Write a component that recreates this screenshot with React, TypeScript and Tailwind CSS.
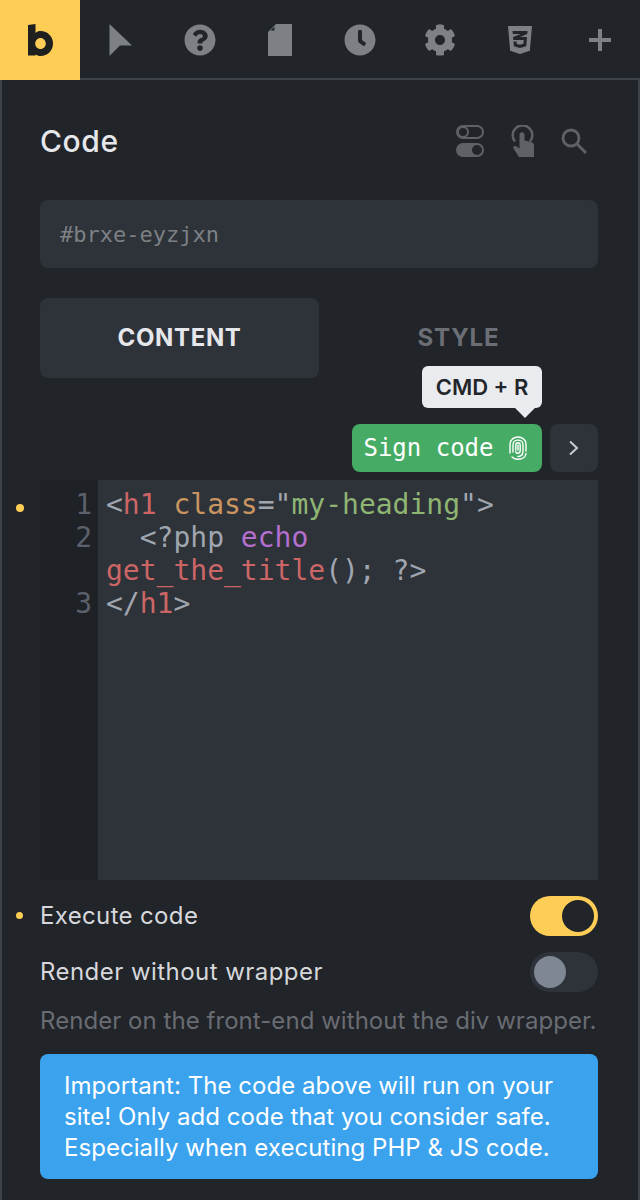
import React from "react";
import { FaCog, FaClock, FaQuestionCircle, FaCss3Alt } from "react-icons/fa";

const sans = "font-['Inter',sans-serif]";
const mono = "font-['DejaVu_Sans_Mono',monospace]";

const Cursor = () => (
  <svg width="23" height="32" viewBox="0 0 23 32" fill="currentColor">
    <path d="M0.5 0 L23 21.5 L11 21.5 L0.5 32 Z" />
  </svg>
);

const Doc = () => (
  <svg width="24" height="32" viewBox="0 0 24 32" fill="currentColor">
    <path d="M8 0 H24 V32 H0 V8 Z M6.5 2.5 L2.5 6.5 H6.5 Z" fillRule="evenodd" />
  </svg>
);

const Plus = () => (
  <svg width="22" height="22" viewBox="0 0 22 22" fill="currentColor">
    <rect x="0" y="9" width="22" height="4" />
    <rect x="9" y="0" width="4" height="22" />
  </svg>
);

const Toggles = () => (
  <svg width="28" height="32" viewBox="0 0 28 32">
    <rect x="1" y="1" width="26" height="12" rx="6" fill="none" stroke="currentColor" strokeWidth="2" />
    <circle cx="7" cy="7" r="5" fill="none" stroke="currentColor" strokeWidth="2" />
    <rect x="0" y="18" width="28" height="14" rx="7" fill="currentColor" />
    <circle cx="21" cy="25" r="5" fill="#212429" />
  </svg>
);

const Tap = () => (
  <svg width="23" height="32" viewBox="0 0 23 32">
    <path d="M4 16.5 A9.8 9.8 0 1 1 19 16.5" fill="none" stroke="currentColor" strokeWidth="2.5" />
    <path
      d="M8.5 9.5 C8.5 6.5 13.5 6.5 13.5 9.5 V15.5 L20 17 C22 17.5 23 18.5 23 20.5 V32 H8 L2.5 23.5 C1.5 21.5 4 20 5.5 21.5 L8.5 23.5 Z"
      fill="currentColor"
    />
  </svg>
);

const Search = () => (
  <svg width="26" height="26" viewBox="0 0 26 26" fill="none" stroke="currentColor" strokeWidth="2.8">
    <circle cx="10" cy="10" r="8" />
    <path d="M16 16 L25 25" />
  </svg>
);

const Fingerprint = () => (
  <svg width="18" height="24" viewBox="0 0 18 24" fill="none" stroke="currentColor" strokeWidth="1.4" strokeLinecap="round">
    <path d="M1 17 V8.5 C1 -1.5 17 -1.5 17 8.5 V15" />
    <path d="M17 17.5 C16.5 21 13.5 23.3 9 23.3 C6.5 23.3 4.5 22.5 3 21" />
    <path d="M4 16 V8.8 C4 2.5 14 2.5 14 8.8 V15 C14 19 11.5 20.5 9 20.5" />
    <path d="M6.8 14 V9 C6.8 6 11.2 6 11.2 9 V14.5 C11.2 18 6.8 18 6.8 15.5" />
    <path d="M9 9 V14" />
  </svg>
);

const tabs = [
  { icon: <Cursor /> },
  { icon: <FaQuestionCircle size={32} /> },
  { icon: <Doc /> },
  { icon: <FaClock size={32} /> },
  { icon: <FaCog size={32} /> },
  { icon: <FaCss3Alt size={32} /> },
  { icon: <Plus /> },
];

export default function App() {
  return (
    <div className={`w-[640px] h-[1200px] bg-[#212429] flex flex-col overflow-hidden ${sans}`}>
      {/* top bar */}
      <div className="flex h-20 shrink-0">
        <div className="w-20 h-20 bg-[#fdcd56] flex items-center justify-center">
          <svg width="25" height="32" viewBox="0 0 25 32" fill="#1f1f1f">
            <path
              d="M0 1 L7.5 0 V9 C9 7.6 10.6 7 12.5 7 C19.5 7 25 12.5 25 19.5 C25 26.5 19.5 32 12.5 32 C10.6 32 9 31.4 7.5 30.5 V31.5 H0 Z M12.5 14 C9.5 14 7.2 16.5 7.2 19.5 C7.2 22.5 9.5 25 12.5 25 C15.5 25 17.8 22.5 17.8 19.5 C17.8 16.5 15.5 14 12.5 14 Z"
              fillRule="evenodd"
            />
          </svg>
        </div>
        <div className="flex-1 flex border-b-2 border-[#3e424b] text-[#7d8185]">
          {tabs.map((t, i) => (
            <div key={i} className="w-20 h-[78px] flex items-center justify-center pt-0.5">
              {t.icon}
            </div>
          ))}
        </div>
      </div>

      {/* panel */}
      <div className="relative flex-1 border-x-2 border-[#3e424b] pl-[38px] pr-10 flex flex-col">
        <div className="flex items-center justify-between h-[120px] pr-[11px] pt-[2px]">
          <h1 className="text-[30px] font-medium text-[#e5e7eb] tracking-[0.02em]">Code</h1>
          <div className="flex items-center gap-[27px] text-[#5e6266]">
            <Toggles />
            <Tap />
            <Search />
          </div>
        </div>

        <div className={`h-[68px] bg-[#2e3239] rounded-lg flex items-center px-5 text-[22px] text-[#7d8185] ${mono}`}>
          #brxe-eyzjxn
        </div>

        <div className="flex mt-[30px] h-20">
          <div className="w-[279px] bg-[#2e3239] rounded-lg flex items-center justify-center text-[24px] font-bold tracking-[0.65px] text-[#e5e7eb]">
            CONTENT
          </div>
          <div className="flex-1 flex items-center justify-center text-[24px] font-bold tracking-[0.9px] text-[#6b6f75]">
            STYLE
          </div>
        </div>

        <div className="relative flex justify-end gap-2 mt-[46px] h-12">
          <div className={`w-[190px] bg-[#46ab64] rounded-lg text-white text-[24px] flex items-center justify-center gap-[15px] pr-1 ${mono}`}>
            Sign code
            <Fingerprint />
          </div>
          <div className="w-12 bg-[#2e3239] rounded-lg flex items-center justify-center text-[#c9ccd1]">
            <svg width="10" height="16" viewBox="0 0 10 16" fill="none" stroke="currentColor" strokeWidth="2">
              <path d="M1 1.5 L8 8 L1 14.5" />
            </svg>
          </div>
          <div className="absolute right-[56px] top-[-58px] w-[120px] h-[42px] bg-[#e9ebef] rounded-md flex items-center justify-center text-[22px] font-semibold text-[#22252a]">
            CMD + R
            <div className="absolute left-[96px] bottom-[-7px] w-[14px] h-[14px] bg-[#e9ebef] rotate-45" />
          </div>
        </div>

        <div className={`flex mt-2 h-[400px] text-[28px] leading-[33px] ${mono}`}>
          <div className="w-[58px] bg-[#1e2125] text-[#5b606a] text-right pr-1.5 pt-2">
            <div>1</div>
            <div>2</div>
            <div>&nbsp;</div>
            <div>3</div>
          </div>
          <div className="flex-1 bg-[#2e3239] pl-2 pt-2 text-[#a0a6b0] whitespace-pre">
            <div>
              {"<"}
              <span className="text-[#cc6666]">h1</span> <span className="text-[#c99560]">class</span>={"\""}
              <span className="text-[#8fb573]">my-heading</span>
              {"\">"}
            </div>
            <div>
              {"  <?php "}
              <span className="text-[#b46fd0]">echo</span>
            </div>
            <div>
              <span className="text-[#cc6666]">get_the_title</span>(); ?{">"}
            </div>
            <div>
              {"</"}
              <span className="text-[#cc6666]">h1</span>
              {">"}
            </div>
          </div>
        </div>

        <div className="flex items-center justify-between mt-4 h-10 text-[24px] tracking-[0.35px] text-[#d6d8dc]">
          <span>Execute code</span>
          <div className="w-[68px] h-10 rounded-full bg-[#fdcd56] flex items-center justify-end pr-1">
            <div className="w-8 h-8 rounded-full bg-[#212429]" />
          </div>
        </div>
        <div className="flex items-center justify-between mt-4 h-10 text-[24px] tracking-[0.45px] text-[#d6d8dc]">
          <span>Render without wrapper</span>
          <div className="w-[68px] h-10 rounded-full bg-[#2e3239] flex items-center pl-1">
            <div className="w-8 h-8 rounded-full bg-[#7f8795]" />
          </div>
        </div>
        <p className="mt-[14px] text-[24px] leading-[30px] tracking-[0.05px] text-[#696c72] whitespace-nowrap">
          Render on the front-end without the div wrapper.
        </p>
        <div className="mt-[18px] h-[125px] bg-[#3ba2ed] rounded-lg px-6 py-[16px] text-[24px] leading-[31px] tracking-[0.05px] text-white">
          Important: The code above will run on your site! Only add code that you consider safe. Especially when executing PHP &amp; JS code.
        </div>

        <span className="absolute left-[14px] top-[424px] w-2 h-2 rounded-full bg-[#fdcd56]" />
        <span className="absolute left-[14px] top-[832px] w-[7px] h-[7px] rounded-full bg-[#fdcd56]" />
      </div>
    </div>
  );
}
